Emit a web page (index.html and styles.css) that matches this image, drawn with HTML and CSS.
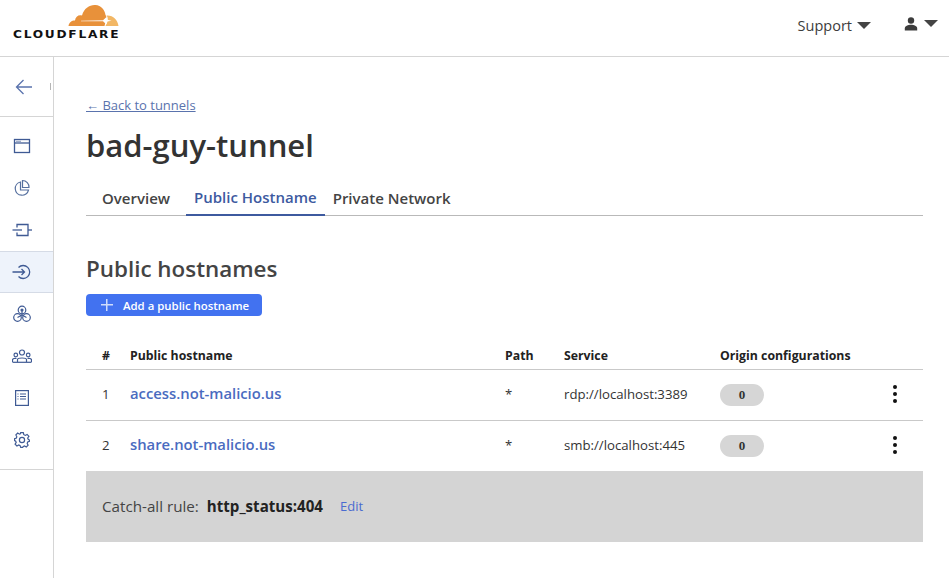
FILE: index.html
```html
<!DOCTYPE html>
<html lang="en">
  <head>
    <meta charset="utf-8">
    <meta name="viewport" content="width=device-width, initial-scale=1">
    <title>bad-guy-tunnel</title>
    <link rel="stylesheet" href="styles.css">
  </head>
  <body>
    <header class="topbar">
      <div class="logo">
        <svg class="logo-cloud" width="51" height="24" viewBox="0 0 51 24">
          <path fill="#e8913a" d="M0.500 23 C1 19.500 3.500 17.500 7 17.500 C7.500 13.500 10.500 11.500 14 12.500 C16 5 22 1.500 27.500 2 C33 2.500 37 7 37.500 12 C38.500 13 38.800 15 38 17.500 L36.500 23 Z"/>
          <path fill="#f2b765" d="M38.500 12.500 C45 12 49.500 16.500 50.500 23 L37.500 23 L39.500 17.500 C40 15.500 39.800 14 38.500 12.500 Z"/>
          <path fill="#fff" d="M13 17.700 L35 17.300 L38.500 14 L39.500 16.800 L43.500 17.700 L39.500 18.600 L38.500 21.500 L35 18.300 L13 18.300 Z"/>
        </svg>
        <span class="logo-text">CLOUDFLARE</span>
      </div>
      <div class="topbar-right">
        <span class="support">Support<span class="caret"></span></span>
        <span class="account">
          <svg width="14" height="14" viewBox="0 0 14 14"><circle cx="7" cy="3.500" r="3.200" fill="#3c3c3c"/><path fill="#3c3c3c" d="M0.800 13.500 V11.500 C0.800 9 4 7.800 7 7.800 C10 7.800 13.200 9 13.200 11.500 V13.500 Z"/></svg>
          <span class="caret"></span>
        </span>
      </div>
    </header>
    <div class="page">
      <nav class="sidebar">
        <div class="side-back">
          <svg width="18" height="16" viewBox="0 0 18 16" fill="none" stroke="#5a73ad" stroke-width="1.300"><path d="M17 8 H1.500 M8.500 1 L1.500 8 L8.500 15"/></svg>
        </div>
        <ul class="side-list">
          <li class="side-item">
            <svg width="18" height="16" viewBox="0 0 18 16" fill="none" stroke="#3f5a94" stroke-width="1.300"><rect x="1.500" y="1.500" width="15" height="13"/><path d="M1.500 5 H16.500"/><path d="M3.500 3.300 H8" stroke-dasharray="1 1"/></svg>
          </li>
          <li class="side-item">
            <svg width="18" height="18" viewBox="0 0 18 18" fill="none" stroke="#56709f" stroke-width="1.200"><path d="M7.500 3 A6.700 6.700 0 1 0 15.500 11 H7.500 Z"/><path d="M9.500 1.500 A6.500 6.500 0 0 1 16 8.500 H9.500 Z"/></svg>
          </li>
          <li class="side-item">
            <svg width="20" height="14" viewBox="0 0 20 14" fill="none" stroke="#3f5a94" stroke-width="1.300"><path d="M5 4.500 V1.500 H16 V12.500 H5 V9.500"/><path d="M0.500 7 H10"/><path d="M16 7 H20"/></svg>
          </li>
          <li class="side-item active">
            <svg width="20" height="16" viewBox="0 0 20 16" fill="none" stroke="#3f5a94" stroke-width="1.300"><path d="M6.500 3.500 A6.500 6.500 0 1 1 6.500 12.500"/><path d="M0.500 8 H12.500 M9.500 5 L12.500 8 L9.500 11"/></svg>
          </li>
          <li class="side-item">
            <svg width="18" height="18" viewBox="0 0 18 18" fill="none" stroke="#3f5a94" stroke-width="1.200"><circle cx="9" cy="5" r="3.800"/><circle cx="4.500" cy="12.500" r="3.800"/><circle cx="13.500" cy="12.500" r="3.800"/><circle cx="9" cy="5" r="1" fill="#3f5a94"/><path d="M9 6 V10 M4.500 12.500 L9 10 L13.500 12.500"/></svg>
          </li>
          <li class="side-item">
            <svg width="20" height="14" viewBox="0 0 20 14" fill="none" stroke="#3f5a94" stroke-width="1.200"><circle cx="10" cy="3.500" r="2.500"/><circle cx="3.800" cy="6" r="1.800"/><circle cx="16.200" cy="6" r="1.800"/><path d="M5.500 13 V10.500 C5.500 8.500 14.500 8.500 14.500 10.500 V13"/><path d="M0.500 13 V11 C0.500 9.500 3 9 4.500 9.500 M19.500 13 V11 C19.500 9.500 17 9 15.500 9.500"/><path d="M0.500 13.300 H19.500"/></svg>
          </li>
          <li class="side-item">
            <svg width="14" height="16" viewBox="0 0 14 16" fill="none" stroke="#3f5a94" stroke-width="1.200"><rect x="0.600" y="0.600" width="12.800" height="14.800"/><path d="M5 4 H11 M5 6.500 H11 M5 9 H11 M2.500 4 H3.500 M2.500 6.500 H3.500 M2.500 9 H3.500"/></svg>
          </li>
          <li class="side-item">
            <svg width="16" height="16" viewBox="0 0 16 16" fill="none" stroke="#3f5a94" stroke-width="1.200"><circle cx="8" cy="8" r="2.600"/><path d="M6.700 0.700 H9.300 L9.800 2.700 L11.300 3.400 L13.100 2.400 L14.900 4.300 L13.700 6 L14.200 7.300 L15.400 8 V9.300 L13.700 10 L13.200 11.400 L14.100 13.200 L12.300 15 L10.500 14 L9.300 14.500 L8.700 15.400 H6.700 L6.100 13.600 L4.800 13 L2.900 14 L1.100 12.200 L2.200 10.400 L1.700 9.200 L0.600 8.600 V6.700 L2.400 6.100 L2.800 4.700 L1.900 2.900 L3.700 1.100 L5.500 2.200 L6.300 1.900 Z"/></svg>
          </li>
        </ul>
      </nav>
      <main class="content">
        <a class="back-link" href="#">← Back to tunnels</a>
        <h1 class="title">bad-guy-tunnel</h1>
        <div class="tabs">
          <span class="tab">Overview</span>
          <span class="tab current">Public Hostname</span>
          <span class="tab last">Private Network</span>
        </div>
        <h2 class="section-title">Public hostnames</h2>
        <button class="add-btn"><span class="plus"></span>Add a public hostname</button>
        <div class="table">
          <div class="row head">
            <span>#</span><span>Public hostname</span><span>Path</span><span>Service</span><span>Origin configurations</span><span></span>
          </div>
          <div class="row">
            <span>1</span><a class="host" href="#">access.not-malicio.us</a><span>*</span><span>rdp://localhost:3389</span><span><b class="pill">0</b></span><span class="dots"><i></i><i></i><i></i></span>
          </div>
          <div class="row">
            <span>2</span><a class="host" href="#">share.not-malicio.us</a><span>*</span><span>smb://localhost:445</span><span><b class="pill">0</b></span><span class="dots"><i></i><i></i><i></i></span>
          </div>
        </div>
        <div class="catch-all">
          <span class="catch-label">Catch-all rule:</span>
          <strong class="catch-value">http_status:404</strong>
          <a class="catch-edit" href="#">Edit</a>
        </div>
      </main>
    </div>
  </body>
</html>
```

FILE: styles.css
```css
* {
    box-sizing: border-box;
}
html, body {
    height: 100%;
}
body {
    margin: 0;
    background-color: #fff;
    color: #333;
    font-family: "Open Sans", "Noto Sans", sans-serif;
    overflow: hidden;
    display: flex;
    flex-direction: column;
}
.topbar {
    height: 57px;
    flex: none;
    display: flex;
    justify-content: space-between;
    align-items: flex-start;
    border-bottom: 1px solid #d5d5d5;
}
.logo {
    width: 106px;
    margin-left: 13px;
    margin-top: 3px;
    display: flex;
    flex-direction: column;
    align-items: flex-end;
}
.logo-cloud {
    display: block;
}
.logo-text {
    align-self: flex-start;
    font-family: "DejaVu Sans", sans-serif;
    font-size: 10.500px;
    line-height: 13px;
    font-weight: bold;
    letter-spacing: 1.500px;
    color: #111;
    white-space: nowrap;
    margin-top: 1px;
    transform: scaleX(1.160);
    transform-origin: left center;
}
.topbar-right {
    display: flex;
    align-items: center;
    height: 50px;
    padding-right: 11px;
}
.support {
    font-size: 14.500px;
    color: #3c3c3c;
    display: flex;
    align-items: center;
}
.support .caret {
    margin-left: 5px;
}
.account {
    margin-left: 33px;
    display: flex;
    align-items: center;
    margin-bottom: 3px;
}
.account .caret {
    margin-left: 6px;
}
.caret {
    display: inline-block;
    width: 0;
    height: 0;
    border-left: 7px solid transparent;
    border-right: 7px solid transparent;
    border-top: 7px solid #444;
}
.page {
    flex: 1;
    display: flex;
    min-height: 0;
}
.sidebar {
    width: 54px;
    flex: none;
    border-right: 1px solid #d5d5d5;
}
.side-back {
    position: relative;
    height: 60px;
    display: flex;
    justify-content: center;
    align-items: center;
    padding-right: 5px;
    border-bottom: 1px solid #d5d5d5;
}
.side-back::after {
    content: "";
    position: absolute;
    right: 0;
    top: 26px;
    width: 2px;
    height: 7px;
    border-left: 1px solid #b5b5b5;
}
.side-list {
    list-style: none;
    margin: 0;
    padding: 8px 0;
    border-bottom: 1px solid #d5d5d5;
}
.side-item {
    height: 42px;
    display: flex;
    justify-content: center;
    align-items: center;
    padding-right: 9px;
}
.side-item.active {
    background-color: #eef3fb;
    border-top: 1px solid #d5dbe6;
    border-bottom: 1px solid #d5dbe6;
}
.content {
    flex: 1;
    padding: 39px 26px 0 32px;
    min-width: 0;
}
.back-link {
    display: block;
    font-size: 13px;
    line-height: 18px;
    color: #5a73ad;
}
.title {
    margin: 10px 0 0;
    font-size: 31px;
    line-height: 42px;
    font-weight: 600;
    color: #333;
}
.tabs {
    margin-top: 10px;
    display: flex;
    height: 40px;
    border-bottom: 1px solid #b9b9b9;
    padding-left: 8px;
}
.tab {
    font-size: 15px;
    font-weight: 600;
    color: #444;
    padding: 12px 8px 0;
    line-height: 20px;
    margin-right: 8px;
}
.tab.current {
    color: #3d5a9f;
    border-bottom: 2px solid #3d5a9f;
    height: 40px;
    padding-top: 11px;
    margin-right: 0;
}
.tab.last {
    margin-right: 0;
}
.section-title {
    margin: 35px 0 0;
    font-size: 22.400px;
    line-height: 36px;
    font-weight: 600;
    color: #444;
}
.add-btn {
    display: flex;
    align-items: center;
    margin-top: 7px;
    width: 176px;
    height: 22px;
    padding: 0 0 0 15px;
    border: 0;
    border-radius: 4px;
    background-color: #4272f0;
    color: #fff;
    font-family: inherit;
    font-size: 11.400px;
    font-weight: 600;
}
.plus {
    width: 12px;
    height: 12px;
    margin-right: 10px;
    background:
        linear-gradient(#cfdcfb, #cfdcfb) center / 12px 1.500px no-repeat,
        linear-gradient(#cfdcfb, #cfdcfb) center / 1.500px 12px no-repeat;
}
.table {
    margin-top: 30px;
}
.row {
    display: grid;
    grid-template-columns: 28px 375px 59px 156px 1fr 39px;
    align-items: center;
    height: 51px;
    padding-left: 16px;
    padding-bottom: 3px;
    border-bottom: 1px solid #c9c9c9;
    font-size: 13.200px;
    color: #333;
}
.row.head {
    height: 24px;
    padding-bottom: 0;
    font-size: 12.300px;
    font-weight: 700;
    color: #222;
    align-items: start;
    line-height: 20px;
}
.row:last-child {
    border-bottom: 0;
}
.host {
    font-size: 14.800px;
    font-weight: 600;
    color: #4a6bc0;
    text-decoration: none;
    margin-top: -2px;
}
.pill {
    display: block;
    width: 44px;
    height: 22px;
    margin-top: 2px;
    border-radius: 11px;
    background-color: #d6d6d6;
    text-align: center;
    font-family: "Liberation Serif", serif;
    font-size: 13px;
    line-height: 22px;
    color: #333;
}
.dots {
    display: flex;
    flex-direction: column;
    align-items: center;
    gap: 3px;
    width: 22px;
}
.dots i {
    display: block;
    width: 4px;
    height: 4px;
    border-radius: 50%;
    background-color: #111;
}
.catch-all {
    height: 71px;
    margin-top: -1px;
    padding-bottom: 1px;
    background-color: #d4d4d4;
    display: flex;
    align-items: center;
    padding-left: 16px;
}
.catch-label {
    font-size: 15.200px;
    color: #444;
}
.catch-value {
    margin-left: 8px;
    font-size: 15.100px;
    font-weight: 700;
    color: #222;
}
.catch-edit {
    margin-left: 17px;
    font-size: 13px;
    color: #4a6bd0;
    text-decoration: none;
}
```
